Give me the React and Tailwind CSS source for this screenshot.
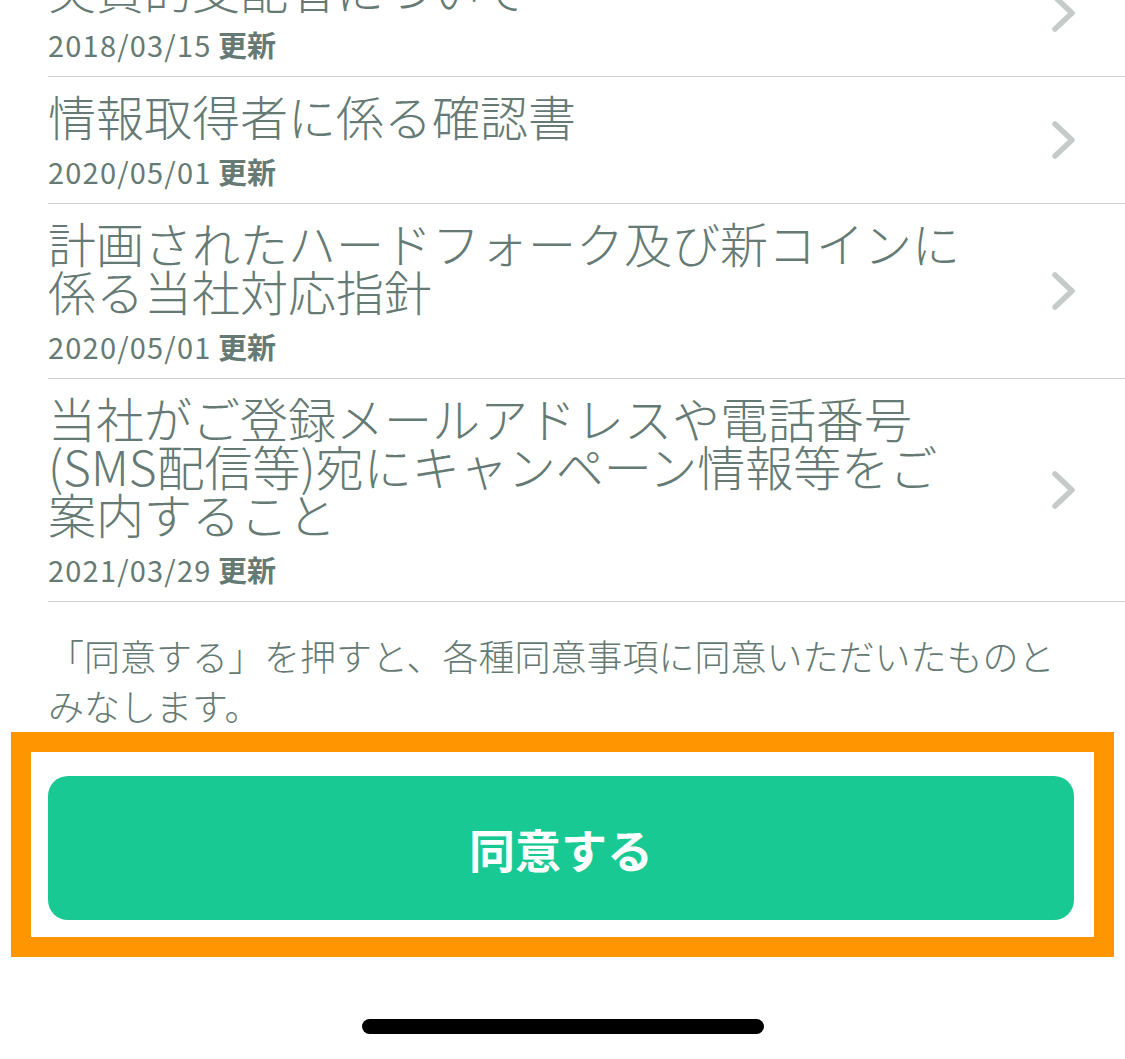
import React from "react";

const FONT = { fontFamily: '"Noto Sans CJK JP", "Noto Sans", sans-serif' };

function Chevron() {
  return (
    <svg width="26" height="40" viewBox="0 0 26 40" className="shrink-0">
      <path d="M4 4 L21 20 L4 36" fill="none" stroke="#c6cbca" strokeWidth="5.5" strokeLinecap="round" strokeLinejoin="round" />
    </svg>
  );
}

function Row({ lines, date, first }) {
  return (
    <div className={`flex items-center border-b border-[#cdd1d0] pt-[14px] pb-[14px] pr-[48px] ${first ? "mt-[-50px]" : ""}`}>
      <div className="flex-1">
        <div className="w-[920px] text-[48px] leading-[48px] font-light text-[#657a74]">
          {lines.map((l, i) => (
            <div key={i}>{l}</div>
          ))}
        </div>
        <div className="mt-[14px] text-[29px] leading-[36px] text-[#657a74]">
          <span className="tracking-[1.2px]">{date}</span> <span className="font-bold">更新</span>
        </div>
      </div>
      <Chevron />
    </div>
  );
}

export default function App() {
  const rows = [
    { lines: ["実質的支配者について"], date: "2018/03/15" },
    { lines: ["情報取得者に係る確認書"], date: "2020/05/01" },
    { lines: ["計画されたハードフォーク及び新コインに", "係る当社対応指針"], date: "2020/05/01" },
    {
      lines: ["当社がご登録メールアドレスや電話番号", "(SMS配信等)宛にキャンペーン情報等をご", "案内すること"],
      date: "2021/03/29",
    },
  ];
  return (
    <div className="w-[1125px] h-[1059px] overflow-hidden bg-white" style={FONT}>
      <div className="pl-[48px]">
        {rows.map((r, i) => (
          <Row key={i} {...r} first={i === 0} />
        ))}
      </div>
      <div className="pl-[48px] pr-[48px] pt-[28px] text-[36px] leading-[50px] font-light text-[#657a74]">
        「同意する」を押すと、各種同意事項に同意いただいたものとみなします。
      </div>
      <div className="mt-[2px] mx-[11px] border-[20px] border-[#ff9500] pl-[17px] pr-[20px] pt-[24px] pb-[17px]">
        <button className="w-full h-[144px] rounded-[20px] bg-[#19c994] text-white text-[46px] font-bold flex items-center justify-center">
          同意する
        </button>
      </div>
      <div className="flex justify-center pt-[62px]">
        <div className="w-[402px] h-[15px] rounded-full bg-black" />
      </div>
    </div>
  );
}
